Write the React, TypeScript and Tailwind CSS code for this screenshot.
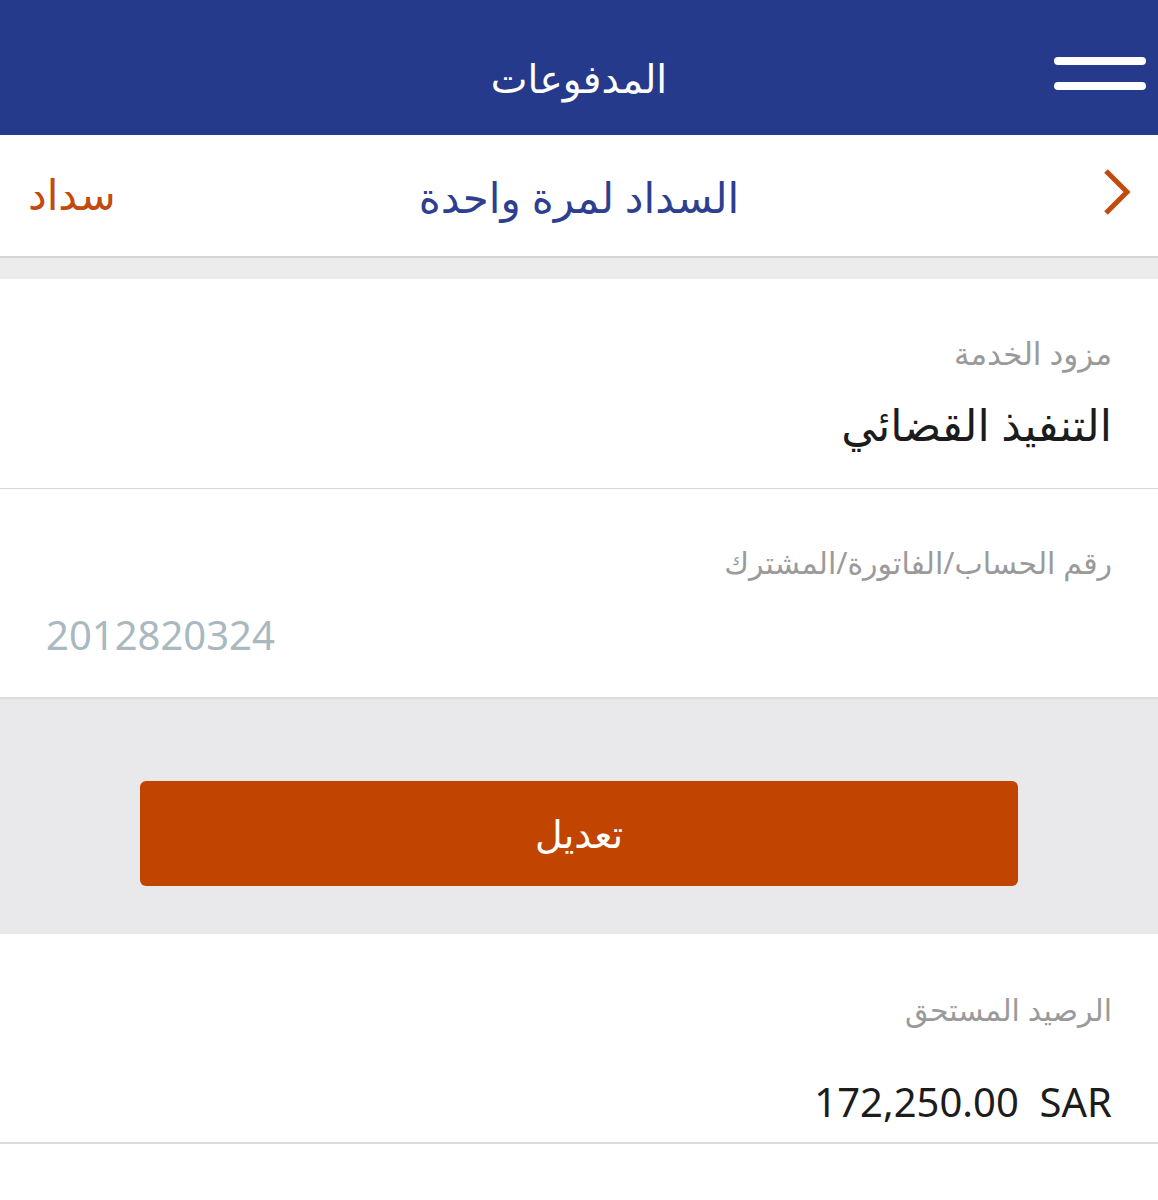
import React from "react";

const font = { fontFamily: '"Noto Sans", "DejaVu Sans", sans-serif' };

export default function App() {
  return (
    <div className="w-[1158px] h-[1200px] bg-white overflow-hidden" style={font}>
      {/* Top bar */}
      <div className="h-[135px] bg-[#263a8b] grid grid-cols-[1fr_auto_1fr] items-center">
        <div />
        <div dir="rtl" className="text-white text-[39px] font-medium pt-[22px]">المدفوعات</div>
        <div className="flex justify-end pr-[12px]">
          <div className="flex flex-col gap-[17px] pt-[12px]">
            <div className="w-[92px] h-[8px] rounded-full bg-white" />
            <div className="w-[92px] h-[8px] rounded-full bg-white" />
          </div>
        </div>
      </div>

      {/* Sub header */}
      <div className="h-[123px] bg-white border-b-2 border-[#d4d4d4] grid grid-cols-[1fr_auto_1fr] items-center">
        <div dir="rtl" className="text-left pl-[28px] text-[#c24a0c] text-[42px] pb-[4px]">سداد</div>
        <div dir="rtl" className="text-[#2d3f8e] text-[42px] pt-[2px]">السداد لمرة واحدة</div>
        <div className="flex justify-end pr-[26px] pb-[8px]">
          <svg width="30" height="48" viewBox="0 0 30 48" fill="none">
            <path d="M4 3 L25 24 L4 45" stroke="#c5480c" strokeWidth="5" strokeLinecap="butt" strokeLinejoin="miter" />
          </svg>
        </div>
      </div>
      <div className="h-[21px] bg-[#ececec]" />

      {/* Service provider */}
      <div dir="rtl" className="h-[210px] border-b border-[#d6d6d6] pr-[46px] pt-[48px]">
        <div className="text-[#9a9a9a] text-[31px] leading-[52px]">مزود الخدمة</div>
        <div className="text-[#1c1c1c] text-[44px] leading-[90px]">التنفيذ القضائي</div>
      </div>

      {/* Account number */}
      <div dir="rtl" className="h-[210px] border-b-2 border-[#dcdcdc] pr-[46px] pt-[48px]">
        <div className="text-[#9a9a9a] text-[30px] leading-[52px]">رقم الحساب/الفاتورة/المشترك</div>
        <div dir="ltr" className="text-left pl-[46px] text-[#aab8c0] text-[40px] leading-[92px]">2012820324</div>
      </div>

      {/* Gray action area */}
      <div className="h-[235px] bg-[#e9e9eb] flex justify-center pt-[82px]">
        <button className="w-[878px] h-[105px] rounded-[6px] bg-[#c14500] text-white text-[38px] flex items-center justify-center">
          <span dir="rtl">تعديل</span>
        </button>
      </div>

      {/* Balance */}
      <div dir="rtl" className="h-[210px] border-b-2 border-[#dcdcdc] pr-[46px] pt-[50px]">
        <div className="text-[#9a9a9a] text-[30px] leading-[52px]">الرصيد المستحق</div>
        <div dir="ltr" className="text-right text-[#1c1c1c] text-[40px] leading-[132px] whitespace-pre">172,250.00  SAR</div>
      </div>
    </div>
  );
}
